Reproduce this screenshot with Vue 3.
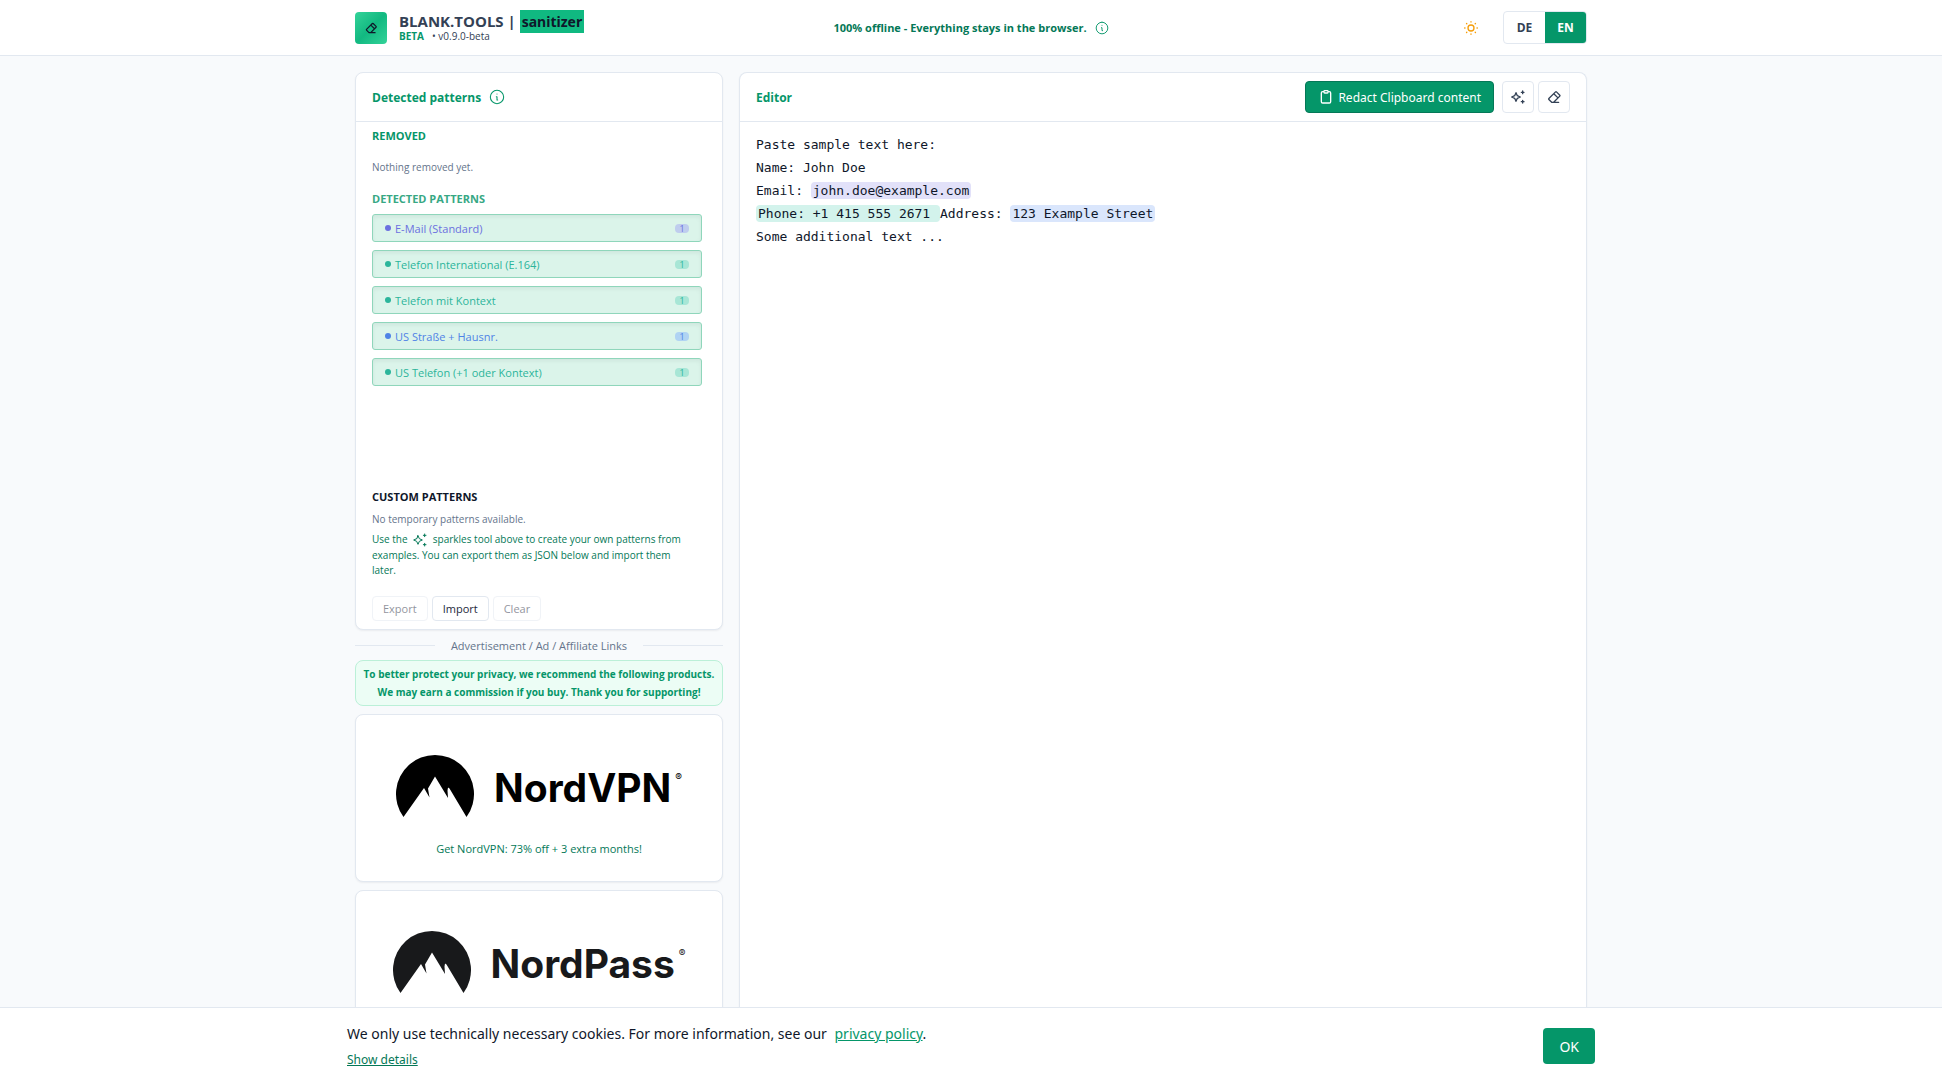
<template>
  <div class="page">
    <header class="topbar">
      <div class="topbar-inner">
        <div class="brand">
          <span class="brand-icon">
            <svg viewBox="0 0 24 24" class="icon-14"><path :d="icons.eraser" /></svg>
          </span>
          <div class="brand-text">
            <h1 class="brand-title">BLANK.TOOLS | <mark>sanitizer</mark></h1>
            <p class="brand-version"><strong>BETA</strong><span>• v0.9.0-beta</span></p>
          </div>
        </div>

        <p class="claim">
          100% offline - Everything stays in the browser.
          <button type="button" class="info-btn" aria-label="Privacy info">
            <svg viewBox="0 0 24 24" class="icon-14"><path :d="icons.info" /></svg>
          </button>
        </p>

        <div class="topbar-actions">
          <button type="button" class="theme-btn" aria-label="Theme">
            <svg viewBox="0 0 24 24" class="icon-16"><path :d="icons.sun" /></svg>
          </button>
          <div class="lang-switch">
            <button v-for="l in languages" :key="l" type="button"
                    :class="{ active: lang === l }" @click="lang = l">{{ l }}</button>
          </div>
        </div>
      </div>
    </header>

    <main class="content">
      <aside class="sidebar">
        <section class="card patterns">
          <div class="card-head">
            <h2>Detected patterns</h2>
            <button type="button" class="info-btn" aria-label="About patterns">
              <svg viewBox="0 0 24 24" class="icon-16"><path :d="icons.info" /></svg>
            </button>
          </div>
          <div class="patterns-body">
            <div class="patterns-list">
              <h3>Removed</h3>
              <p class="empty">Nothing removed yet.</p>
              <h3 class="soft">Detected patterns</h3>
              <button v-for="p in patterns" :key="p.name" type="button" class="pattern" :class="p.tone">
                <span class="dot"></span>
                <span class="pattern-name">{{ p.name }}</span>
                <span class="count">{{ p.count }}</span>
              </button>
            </div>
            <div class="custom">
              <h3>Custom patterns</h3>
              <p class="muted">No temporary patterns available.</p>
              <p class="hint">
                Use the
                <svg viewBox="0 0 24 24" class="icon-16"><path :d="icons.sparkles" /></svg>
                sparkles tool above to create your own patterns from examples. You can export them as JSON below and import them later.
              </p>
              <div class="custom-actions">
                <button type="button" disabled>Export</button>
                <button type="button">Import</button>
                <button type="button" disabled>Clear</button>
              </div>
            </div>
          </div>
        </section>

        <div class="ad-label"><span>Advertisement / Ad / Affiliate Links</span></div>

        <p class="ad-notice">
          To better protect your privacy, we recommend the following products.<br>
          We may earn a commission if you buy. Thank you for supporting!
        </p>

        <a v-for="ad in ads" :key="ad.name" href="#" class="card ad" :class="ad.tone">
          <span class="ad-logo">
            <svg viewBox="0 0 78 62" class="ad-mark">
              <path d="M7.500 62A39 39 0 1 1 70.500 62L53.500 33.500l-1.500-1-.5 3 .5 7.500-13-21.500-7 12 1.500 9-5.500-9.500Z" />
            </svg>
            <span class="ad-name">{{ ad.name }}</span><sup>®</sup>
          </span>
          <span v-if="ad.text" class="ad-text">{{ ad.text }}</span>
        </a>
      </aside>

      <section class="card editor">
        <div class="card-head">
          <h2>Editor</h2>
          <div class="tools">
            <button type="button" class="redact-btn">
              <svg viewBox="0 0 24 24" class="icon-16"><path :d="icons.clipboard" /></svg>
              Redact Clipboard content
            </button>
            <button type="button" class="tool-btn" aria-label="Create pattern">
              <svg viewBox="0 0 24 24" class="icon-16"><path :d="icons.sparkles" /></svg>
            </button>
            <button type="button" class="tool-btn" aria-label="Clear editor">
              <svg viewBox="0 0 24 24" class="icon-16"><path :d="icons.eraser" /></svg>
            </button>
          </div>
        </div>
        <div class="editor-text" contenteditable="true" role="textbox" aria-label="Editor" spellcheck="false">
          <div v-for="(line, i) in lines" :key="i"><span v-for="(part, j) in line" :key="j" :class="part.tone">{{ part.text }}</span></div>
        </div>
      </section>
    </main>

    <footer class="cookies">
      <div class="cookies-inner">
        <div>
          <p>We only use technically necessary cookies. For more information, see our <a href="#">privacy policy</a>.</p>
          <button type="button" class="details-btn">Show details</button>
        </div>
        <button type="button" class="ok-btn">OK</button>
      </div>
    </footer>
  </div>
</template>

<script setup>
import { ref } from 'vue';

const languages = ['DE', 'EN'];
const lang = ref('EN');

const patterns = [
  { name: 'E-Mail (Standard)', count: 1, tone: 'indigo' },
  { name: 'Telefon International (E.164)', count: 1, tone: 'teal' },
  { name: 'Telefon mit Kontext', count: 1, tone: 'teal' },
  { name: 'US Straße + Hausnr.', count: 1, tone: 'blue' },
  { name: 'US Telefon (+1 oder Kontext)', count: 1, tone: 'teal' }
];

const ads = [
  { name: 'NordVPN', text: 'Get NordVPN: 73% off + 3 extra months!', tone: 'vpn' },
  { name: 'NordPass', tone: 'pass' }
];

const lines = [
  [{ text: 'Paste sample text here:' }],
  [{ text: 'Name: John Doe' }],
  [{ text: 'Email: ' }, { text: 'john.doe@example.com', tone: 'hl indigo' }],
  [{ text: 'Phone: +1 415 555 2671 ', tone: 'hl teal' }, { text: 'Address: ' }, { text: '123 Example Street', tone: 'hl blue' }],
  [{ text: 'Some additional text ...' }]
];

const icons = {
  eraser: 'M19 20H8.500l-4.200-4.300a1 1 0 0 1 0-1.400l10-10a1 1 0 0 1 1.400 0l5 5a1 1 0 0 1 0 1.400L11.500 20M18 13.300 11.700 7',
  info: 'M12 2a10 10 0 1 0 0 20 10 10 0 1 0 0-20M12 7.500h.01M11 11.500h1v5h1',
  sun: 'M12 7.500a4.500 4.500 0 1 0 0 9 4.500 4.500 0 1 0 0-9M12 2.500v.5M12 21v.5M2.500 12h.5M21 12h.5M5.300 5.300l.4.4M18.300 18.300l.4.4M5.300 18.700l.4-.4M18.300 5.700l.4-.4',
  sparkles: 'M9 5.500 11 10l4.500 2L11 14l-2 4.500L7 14l-4.500-2L7 10ZM19 3v4M17 5h4M19 17v4M17 19h4',
  clipboard: 'M9 4H7a2 2 0 0 0-2 2v13a2 2 0 0 0 2 2h10a2 2 0 0 0 2-2V6a2 2 0 0 0-2-2h-2M10 2.500h4a1 1 0 0 1 1 1V5a1 1 0 0 1-1 1h-4a1 1 0 0 1-1-1V3.500a1 1 0 0 1 1-1Z'
};
</script>

<style>
body {
  margin: 0;
}
</style>

<style scoped>
.page {
  display: flex;
  flex-direction: column;
  height: 100vh;
  overflow: hidden;
  background: #f8fafc;
  color: #0f172a;
  font-family: "Open Sans", "Noto Sans", sans-serif;
  font-size: 12px;
}

h1, h2, h3, p {
  margin: 0;
}

button {
  font: inherit;
  color: inherit;
  padding: 0;
  border: 0;
  background: none;
  cursor: pointer;
}

svg {
  flex-shrink: 0;
}

.icon-14, .icon-16 {
  width: 14px;
  height: 14px;
  fill: none;
  stroke: currentColor;
  stroke-width: 2;
  stroke-linecap: round;
  stroke-linejoin: round;
}

.icon-16 {
  width: 16px;
  height: 16px;
}

/* Header */
.topbar {
  background: #fff;
  border-bottom: 1px solid #e2e8f0;
}

.topbar-inner {
  display: grid;
  grid-template-columns: 1fr auto 1fr;
  align-items: center;
  box-sizing: border-box;
  max-width: 1280px;
  height: 55px;
  margin: 0 auto;
  padding: 0 24px;
}

.brand {
  display: flex;
  align-items: center;
  gap: 12px;
}

.brand-icon {
  display: grid;
  place-items: center;
  width: 32px;
  height: 32px;
  border-radius: 4px;
  background: linear-gradient(135deg, #34d399, #12b981 50%, #34d399);
}

.brand-title {
  font-size: 15px;
  line-height: 16px;
  font-weight: 700;
  color: #334155;
}

.brand-title mark {
  padding: 2px;
  background: #10b981;
  color: #0f172a;
  font-family: "Noto Sans", sans-serif;
  font-size: 14px;
}

.brand-version {
  display: flex;
  gap: 8px;
  font-size: 10px;
  line-height: 12px;
  color: #334155;
}

.brand-version strong {
  color: #059669;
}

.claim {
  display: flex;
  align-items: center;
  gap: 8px;
  font-size: 11px;
  font-weight: 700;
  color: #047857;
}

.info-btn {
  display: flex;
  color: #059669;
}

.info-btn svg {
  stroke-width: 1.6;
}

.topbar-actions {
  display: flex;
  align-items: center;
  justify-content: flex-end;
  gap: 24px;
}

.theme-btn {
  display: flex;
  color: #f59e0b;
}

.lang-switch {
  display: flex;
  border: 1px solid #e2e8f0;
  border-radius: 4px;
  overflow: hidden;
}

.lang-switch button {
  width: 41px;
  height: 31px;
  font-weight: 700;
  color: #334155;
}

.lang-switch .active {
  background: #059669;
  color: #fff;
}

/* Layout */
.content {
  flex: 1;
  min-height: 0;
  display: grid;
  grid-template-columns: minmax(0, 368fr) minmax(0, 848fr);
  gap: 16px;
  box-sizing: border-box;
  width: 100%;
  max-width: 1280px;
  margin: 0 auto;
  padding: 16px 24px 0;
  overflow: hidden;
}

.card {
  background: #fff;
  border: 1px solid #e2e8f0;
  border-radius: 8px;
  box-shadow: 0 1px 2px rgba(15, 23, 42, 0.06);
}

.card-head {
  display: flex;
  align-items: center;
  gap: 8px;
  height: 48px;
  padding: 0 16px;
  border-bottom: 1px solid #e2e8f0;
}

.card-head h2 {
  font-size: 12px;
  font-weight: 700;
  color: #059669;
}

/* Patterns */
.patterns-body {
  padding: 7px 16px 8px;
}

.patterns-list {
  display: flex;
  flex-direction: column;
  gap: 8px;
  min-height: 361px;
  padding-right: 4px;
}

h3 {
  font-size: 11px;
  line-height: 14px;
  font-weight: 700;
  text-transform: uppercase;
  color: #059669;
}

h3.soft {
  color: #37a884;
}

.empty {
  padding: 8px 0 9px;
  font-size: 10px;
  line-height: 16px;
  color: #64748b;
}

.pattern {
  display: flex;
  align-items: center;
  gap: 4px;
  height: 28px;
  box-sizing: border-box;
  padding: 0 12px;
  border: 1px solid #8fd6bb;
  border-radius: 3px;
  background: #dbf4ea;
  box-shadow: inset 0 2px 4px rgba(15, 23, 42, 0.06);
  font-size: 11px;
  text-align: left;
}

.pattern-name {
  flex: 1;
}

.pattern .dot {
  width: 6px;
  height: 6px;
  border-radius: 50%;
  background: currentColor;
}

.count {
  width: 14px;
  border-radius: 4px;
  font-size: 9px;
  line-height: 9px;
  text-align: center;
}

.pattern.indigo {
  color: #6b70e0;
}

.pattern.teal {
  color: #2bb59b;
}

.pattern.blue {
  color: #4f83e6;
}

.pattern.indigo .count {
  background: #bfcdee;
}

.pattern.teal .count {
  background: #a8e6d6;
}

.pattern.blue .count {
  background: #b0d3f3;
}

.custom h3 {
  color: #0f172a;
}

.muted, .hint {
  font-size: 10px;
  line-height: 15px;
}

.muted {
  margin-top: 8px;
  color: #64748b;
}

.hint {
  margin-top: 5px;
  padding-right: 16px;
  color: #047857;
}

.hint svg {
  margin: 0 2px;
  vertical-align: middle;
  stroke-width: 1.5;
}

.custom-actions {
  display: flex;
  gap: 4px;
  margin-top: 18px;
}

.custom-actions button {
  height: 25px;
  padding: 0 10px;
  border: 1px solid #e2e8f0;
  border-radius: 4px;
  font-size: 11px;
  color: #1e293b;
}

.custom-actions button:disabled {
  opacity: 0.5;
}

/* Ads */
.ad-label {
  display: flex;
  align-items: center;
  gap: 16px;
  height: 30px;
  font-size: 11px;
  color: #64748b;
}

.ad-label::before, .ad-label::after {
  content: "";
  flex: 1;
  height: 1px;
  background: #e2e8f0;
}

.ad-notice {
  margin-bottom: 8px;
  padding: 4px 0;
  border: 1px solid #bbf0d8;
  border-radius: 8px;
  background: #ecfdf5;
  font-size: 10px;
  line-height: 18px;
  font-weight: 700;
  text-align: center;
  white-space: nowrap;
  color: #059669;
}

.ad {
  display: flex;
  flex-direction: column;
  align-items: center;
  gap: 24px;
  margin-bottom: 8px;
  padding: 40px 0 24px;
  text-decoration: none;
  color: #047857;
}

.ad-logo {
  display: flex;
  align-items: center;
  color: #000;
}

.ad.pass .ad-logo {
  color: #18191b;
}

.ad-mark {
  width: 78px;
  height: 62px;
  margin-right: 20px;
  fill: currentColor;
}

.ad-name {
  padding-top: 4px;
  font-family: Inter, sans-serif;
  font-size: 39px;
  line-height: 48px;
  font-weight: 700;
}

.ad-logo sup {
  align-self: flex-start;
  margin: 16px 0 0 4px;
  font-family: Inter, sans-serif;
  font-size: 10px;
  line-height: 12px;
}

.ad-text {
  font-size: 11px;
  line-height: 16px;
}

/* Editor */
.editor {
  border-bottom: 0;
  border-radius: 8px 8px 0 0;
}

.editor .card-head {
  justify-content: space-between;
}

.tools {
  display: flex;
  gap: 4px;
}

.redact-btn {
  display: flex;
  align-items: center;
  gap: 4px;
  height: 32px;
  box-sizing: border-box;
  margin-right: 4px;
  padding: 0 12px;
  border: 1px solid #047857;
  border-radius: 4px;
  background: #059669;
  font-family: "Noto Sans", sans-serif;
  color: #fff;
}

.tool-btn {
  display: grid;
  place-items: center;
  width: 32px;
  height: 32px;
  border: 1px solid #e2e8f0;
  border-radius: 4px;
  color: #334155;
}

.editor-text {
  padding: 11px 16px;
  font-family: "DejaVu Sans Mono", monospace;
  font-size: 13px;
  line-height: 23px;
  white-space: pre-wrap;
  outline: none;
}

.hl {
  padding: 1px 2px;
  border-radius: 4px;
}

.hl.indigo {
  background: #e2e1f9;
}

.hl.teal {
  background: #d3f3ec;
}

.hl.blue {
  background: #dae6fc;
}

/* Cookie bar */
.cookies {
  background: #fff;
  border-top: 1px solid #e2e8f0;
  font-family: "Noto Sans", sans-serif;
}

.cookies-inner {
  display: flex;
  align-items: center;
  justify-content: space-between;
  box-sizing: border-box;
  max-width: 1280px;
  margin: 0 auto;
  padding: 12px 16px;
}

.cookies p {
  font-size: 14px;
  line-height: 28px;
}

.cookies a {
  margin-left: 4px;
  color: #059669;
}

.details-btn {
  line-height: 24px;
  text-decoration: underline;
  color: #047857;
}

.ok-btn {
  height: 36px;
  padding: 0 16px;
  border-radius: 4px;
  background: #059669;
  font-size: 14px;
  color: #fff;
}
</style>
